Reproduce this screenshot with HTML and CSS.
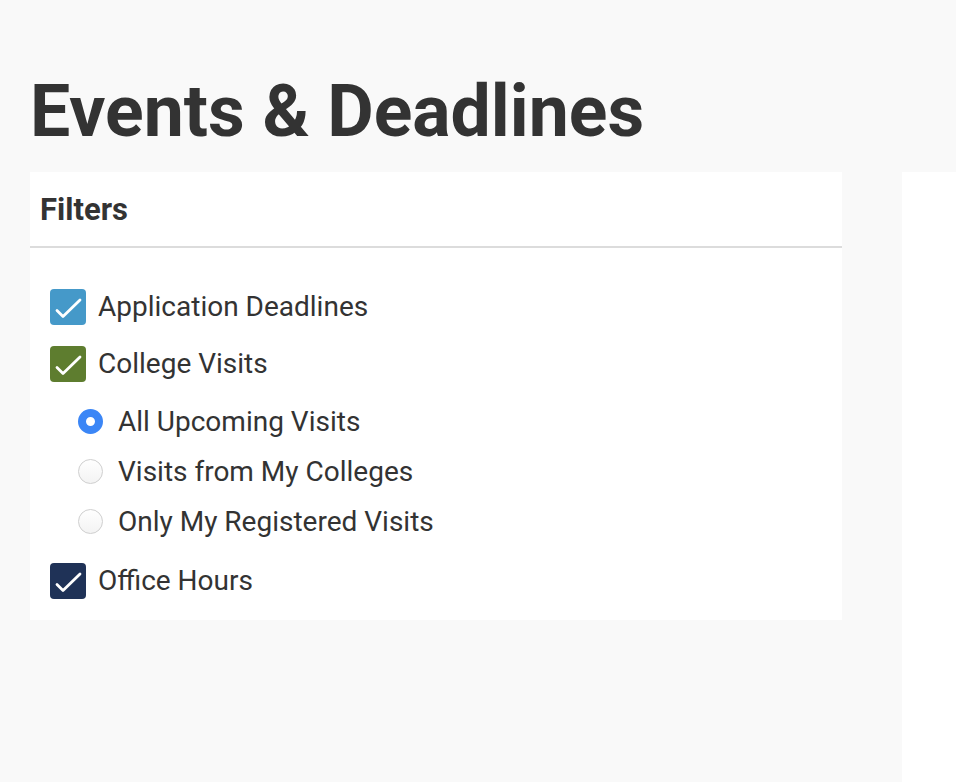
FILE: index.html
```html
<!DOCTYPE html>
<html lang="en">
<head>
  <meta charset="UTF-8">
  <meta name="viewport" content="width=device-width, initial-scale=1.0">
  <title>Events &amp; Deadlines</title>
  <link rel="stylesheet" href="styles.css">
</head>
<body>
  <div class="page">
    <h1>Events &amp; Deadlines</h1>
    <div class="layout">
      <!-- Filters Card -->
      <div class="filters-card">
        <div class="filters-header">Filters</div>
        <div class="filter-list">
          <label class="check-row">
            <span class="box box-blue">
              <svg width="36" height="36" viewBox="0 0 36 36"><path d="M7 21.5 L13 27.5 L30 11" fill="none" stroke="#fff" stroke-width="2.8" stroke-linecap="round" stroke-linejoin="round"/></svg>
            </span>
            Application Deadlines
          </label>
          <label class="check-row">
            <span class="box box-green">
              <svg width="36" height="36" viewBox="0 0 36 36"><path d="M7 21.5 L13 27.5 L30 11" fill="none" stroke="#fff" stroke-width="2.8" stroke-linecap="round" stroke-linejoin="round"/></svg>
            </span>
            College Visits
          </label>
          <!-- Visit Options -->
          <div class="radio-group">
            <label class="radio-row"><span class="radio checked"></span>All Upcoming Visits</label>
            <label class="radio-row"><span class="radio"></span>Visits from My Colleges</label>
            <label class="radio-row"><span class="radio"></span>Only My Registered Visits</label>
          </div>
          <label class="check-row">
            <span class="box box-navy">
              <svg width="36" height="36" viewBox="0 0 36 36"><path d="M7 21.5 L13 27.5 L30 11" fill="none" stroke="#fff" stroke-width="2.8" stroke-linecap="round" stroke-linejoin="round"/></svg>
            </span>
            Office Hours
          </label>
        </div>
      </div>
      <div class="spacer"></div>
      <div class="side-panel"></div>
    </div>
  </div>
</body>
</html>
```

FILE: styles.css
```css
html, body {
  height: 100%;
}
body {
  font-family: Roboto, 'Liberation Sans', sans-serif;
  margin: 0;
  padding: 0;
  background: #f9f9f9;
  color: #333;
  overflow: hidden;
}
.page {
  padding: 76px 0 0 30px;
  height: 100%;
  box-sizing: border-box;
  display: flex;
  flex-direction: column;
}
.page h1 {
  font-size: 71.5px;
  font-weight: 700;
  line-height: 1;
  margin: 0 0 24.5px;
  color: #333;
}
.layout {
  display: flex;
  align-items: flex-start;
  flex: 1;
}
.filters-card {
  width: 812px;
  background: #fff;
}
.filters-header {
  height: 74px;
  display: flex;
  align-items: center;
  padding-left: 10px;
  font-size: 31px;
  font-weight: 700;
  border-bottom: 2px solid #dcdcdc;
}
.filter-list {
  padding: 30px 20px 11px;
}
.check-row {
  height: 57px;
  display: flex;
  align-items: center;
  gap: 12px;
  font-size: 28px;
}
.box {
  width: 36px;
  height: 36px;
  border-radius: 4px;
  display: flex;
  flex-shrink: 0;
}
.box-blue {
  background: #4599c9;
}
.box-green {
  background: #5e7d2f;
}
.box-navy {
  background: #1f3257;
}
.radio-group {
  padding: 4px 0 6px 28px;
}
.radio-row {
  height: 50px;
  display: flex;
  align-items: center;
  gap: 15px;
  font-size: 28px;
}
.radio {
  width: 25px;
  height: 25px;
  border-radius: 50%;
  box-sizing: border-box;
  border: 1px solid #cfcfcf;
  background: linear-gradient(#fff, #f3f3f3);
  flex-shrink: 0;
}
.radio.checked {
  border: 8.5px solid #3b86f6;
  background: #fff;
}
.spacer {
  width: 60px;
}
.side-panel {
  flex: 1;
  align-self: stretch;
  background: #fff;
}
```
